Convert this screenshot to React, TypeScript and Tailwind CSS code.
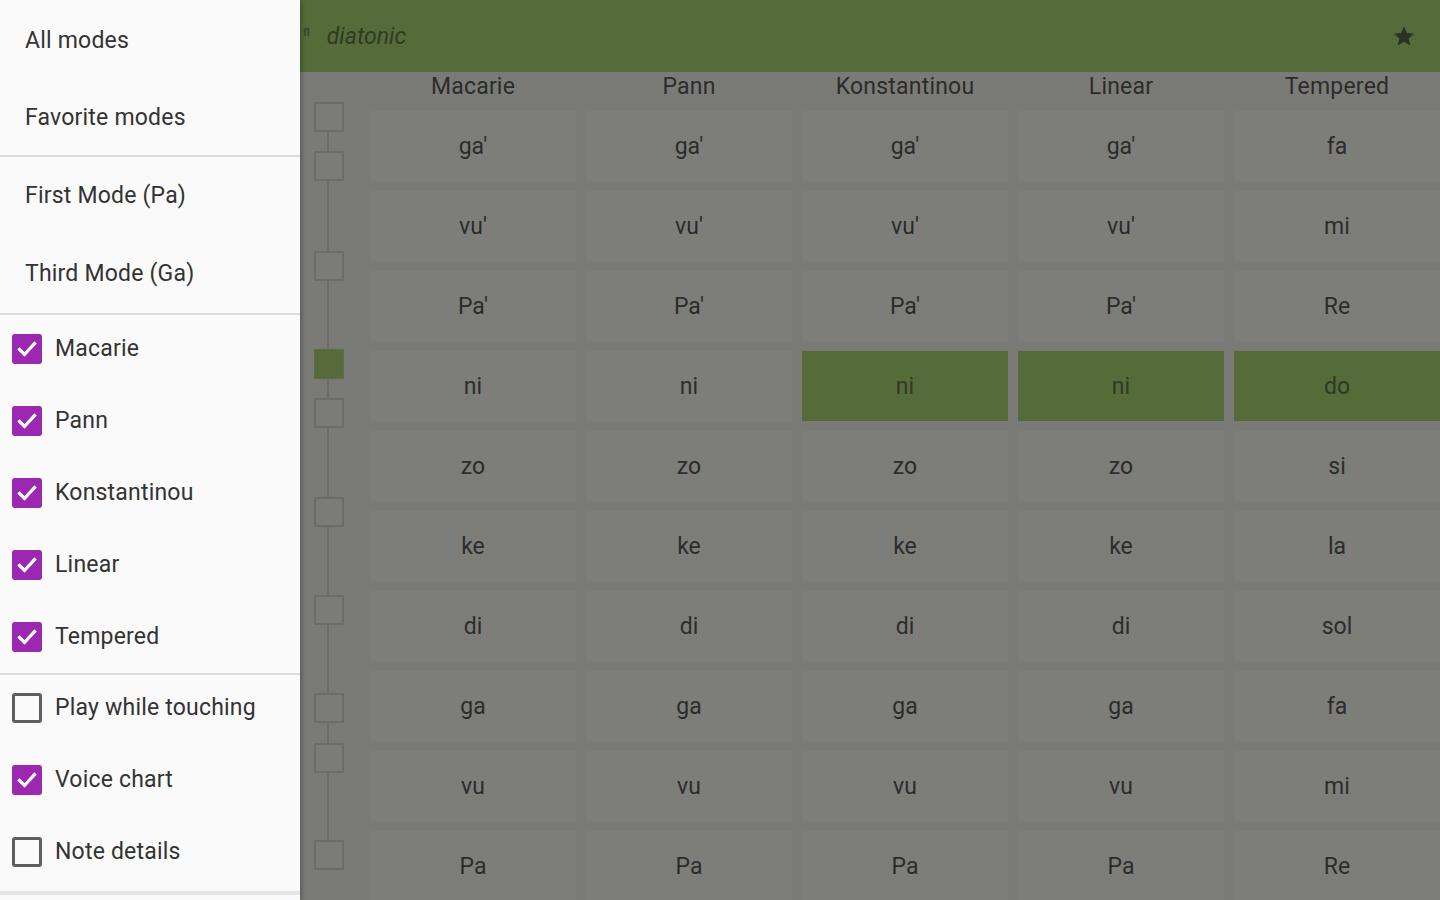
import React from 'react';

const font = { fontFamily: 'Roboto, "Noto Sans", sans-serif' };

const columns = ['Macarie', 'Pann', 'Konstantinou', 'Linear', 'Tempered'];

const rows: string[][] = [
  ["ga'", "ga'", "ga'", "ga'", 'fa'],
  ["vu'", "vu'", "vu'", "vu'", 'mi'],
  ["Pa'", "Pa'", "Pa'", "Pa'", 'Re'],
  ['ni', 'ni', 'ni', 'ni', 'do'],
  ['zo', 'zo', 'zo', 'zo', 'si'],
  ['ke', 'ke', 'ke', 'ke', 'la'],
  ['di', 'di', 'di', 'di', 'sol'],
  ['ga', 'ga', 'ga', 'ga', 'fa'],
  ['vu', 'vu', 'vu', 'vu', 'mi'],
  ['Pa', 'Pa', 'Pa', 'Pa', 'Re'],
];

// voice chart steps, top offset from the body top
const steps = [30, 79, 179, 277, 326, 425, 523, 621, 671, 768];

const Check = ({ on }: { on: boolean }) =>
  on ? (
    <div className="w-[30px] h-[30px] rounded-[3px] bg-[#9c27b0] flex items-center justify-center shrink-0">
      <svg viewBox="0 0 24 24" className="w-[24px] h-[24px]" fill="none" stroke="white" strokeWidth="3.2" strokeLinecap="square">
        <path d="M4.5 12.5l5 5L19.5 6.5" />
      </svg>
    </div>
  ) : (
    <div className="w-[30px] h-[30px] rounded-[3px] border-[3px] border-[#5f5f5f] shrink-0" />
  );

const Drawer = () => {
  const checks: [string, boolean][] = [
    ['Macarie', true],
    ['Pann', true],
    ['Konstantinou', true],
    ['Linear', true],
    ['Tempered', true],
  ];
  const opts: [string, boolean][] = [
    ['Play while touching', false],
    ['Voice chart', true],
    ['Note details', false],
  ];
  return (
    <div className="w-[300px] h-[900px] bg-[#fafafa] shrink-0 flex flex-col text-[23px] tracking-[0.2px] text-[#333] shadow-[2px_0_4px_rgba(0,0,0,0.25)] z-10 relative">
      <div className="h-[78px] flex items-center pl-[25px] pt-[4px]">All modes</div>
      <div className="h-[77px] flex items-center pl-[25px] pt-[4px]">Favorite modes</div>
      <div className="h-[2px] bg-[#dcdcdc]" />
      <div className="h-[78px] flex items-center pl-[25px]">First Mode (Pa)</div>
      <div className="h-[78px] flex items-center pl-[25px]">Third Mode (Ga)</div>
      <div className="h-[2px] bg-[#dcdcdc]" />
      <div>
        {checks.map(([label, on]) => (
          <div key={label} className="h-[72px] flex items-center gap-[13px] pl-[12px] pb-[4px]">
            <Check on={on} />
            <span>{label}</span>
          </div>
        ))}
      </div>
      <div className="h-[2px] bg-[#dcdcdc] -mt-[2px]" />
      <div>
        {opts.map(([label, on]) => (
          <div key={label} className="h-[72px] flex items-center gap-[13px] pl-[12px] pb-[6px]">
            <Check on={on} />
            <span>{label}</span>
          </div>
        ))}
      </div>
      <div className="h-[4px] bg-[#e4e4e4]" />
    </div>
  );
};

const VoiceChart = () => (
  <div className="relative w-[30px] h-full ml-[14px] shrink-0">
    <div className="absolute left-[13px] top-[44px] h-[740px] w-[2px] bg-[#6b6c68]" />
    {steps.map((top, i) => (
      <div
        key={i}
        style={{ top }}
        className={
          i === 3
            ? 'absolute left-0 w-[30px] h-[30px] bg-[#566b39] border border-[#5a7040]'
            : 'absolute left-0 w-[30px] h-[30px] bg-[#7b7c78] border-2 border-[#6c6d69]'
        }
      />
    ))}
  </div>
);

const Main = () => (
  <div className="flex-1 h-[900px] bg-[#7a7b77] flex flex-col overflow-hidden">
    <div className="h-[72px] bg-[#556b3a] flex items-center shrink-0">
      <span className="ml-[3px] text-[11px] text-[#39472a] font-bold mr-[17px] -mt-[6px]">ﬂ</span>
      <span className="italic text-[23px] text-[#2f3b22] pt-[3px]">diatonic</span>
      <svg viewBox="0 0 24 24" className="w-[24px] h-[24px] ml-auto mr-[24px]" fill="#2a3322">
        <path d="M12 2.5l2.9 6.6 7.1.6-5.4 4.7 1.6 7-6.2-3.7-6.2 3.7 1.6-7L2 9.7l7.1-.6z" />
      </svg>
    </div>
    <div className="flex flex-1">
      <VoiceChart />
      <div className="ml-[21px] flex flex-col">
        <div className="h-[34px] grid grid-cols-[repeat(5,216px)] text-[23px] tracking-[0.2px] text-[#2c2c2c]">
          {columns.map((c) => (
            <div key={c} className="flex items-center justify-center -mt-[3px]">
              {c}
            </div>
          ))}
        </div>
        {rows.map((row, r) => (
          <div key={r} className="h-[80px] grid grid-cols-[repeat(5,216px)] text-[23px] text-[#2c2c2c]">
            {row.map((n, c) => (
              <div key={c} className="p-[5px]">
                <div
                  className={
                    r === 3 && c >= 2
                      ? 'h-full bg-[#566b3a] flex items-center justify-center pt-[2px] text-[#2e3a24]'
                      : 'h-full bg-[#7d7e7a] flex items-center justify-center pt-[2px]'
                  }
                >
                  {n}
                </div>
              </div>
            ))}
          </div>
        ))}
      </div>
    </div>
  </div>
);

export default function App() {
  return (
    <div className="w-[1440px] h-[900px] flex overflow-hidden" style={font}>
      <Drawer />
      <Main />
    </div>
  );
}
